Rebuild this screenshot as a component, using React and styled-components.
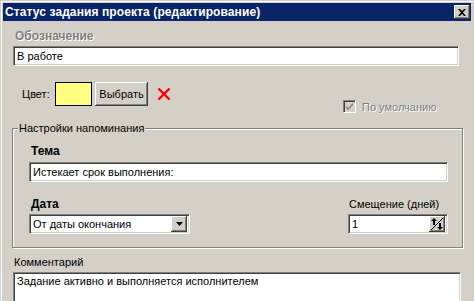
import styled, { createGlobalStyle } from "styled-components";

const GlobalStyle = createGlobalStyle`
  html, body {
    margin: 0;
    padding: 0;
    background: #d4d0c8;
  }
  body {
    font-family: "Liberation Sans", Arial, sans-serif;
    font-size: 11px;
    color: #000;
  }
`;

const sunken = `
  border: 1px solid;
  border-color: #808080 #ffffff #ffffff #808080;
  box-shadow: inset 1px 1px 0 #404040, inset -1px -1px 0 #d4d0c8;
`;

const raised = `
  box-shadow: inset -1px -1px 0 #404040, inset 1px 1px 0 #ffffff,
    inset -2px -2px 0 #808080, inset 2px 2px 0 #d4d0c8;
`;

const Window = styled.div`
  width: 474px;
  height: 301px;
  box-sizing: border-box;
  padding: 3px 3px 0 3px;
  background: #d4d0c8;
  overflow: hidden;
  box-shadow: inset 1px 1px 0 #d4d0c8, inset 2px 2px 0 #ffffff;
`;

const Caption = styled.div`
  height: 18px;
  background: #0a246a;
  display: flex;
  align-items: center;
  justify-content: space-between;
  padding: 0 1px 0 2px;
  color: #fff;
  font-weight: bold;
  font-size: 12px;
  letter-spacing: 0.1px;
`;

const CloseButton = styled.div`
  width: 16px;
  height: 14px;
  background: #d4d0c8;
  display: flex;
  align-items: center;
  justify-content: center;
  ${raised}
`;

const Body = styled.div`
  padding: 8px 0 0 10px;
`;

const BoldLabel = styled.div`
  font-size: 12px;
  font-weight: bold;
  line-height: 14px;
  height: 14px;
  margin-left: 2px;
  margin-bottom: ${(p) => p.$gap || 3}px;
  color: ${(p) => (p.$disabled ? "#808080" : "#000")};
  text-shadow: ${(p) => (p.$disabled ? "1px 1px 0 #ffffff" : "none")};
`;

const Label = styled.div`
  line-height: 14px;
  height: 14px;
  margin-left: 1px;
  margin-bottom: 3px;
`;

const Field = styled.input`
  display: block;
  width: ${(p) => p.$w}px;
  height: 20px;
  box-sizing: border-box;
  margin: 0;
  padding: 0 3px;
  background: #fff;
  font-family: inherit;
  font-size: 11px;
  color: #000;
  outline: none;
  ${sunken}
`;

const ColorRow = styled.div`
  display: flex;
  align-items: flex-start;
  margin-top: 16px;
  height: 31px;
`;

const ColorLabel = styled.div`
  width: 33px;
  margin-left: 9px;
  line-height: 24px;
`;

const Swatch = styled.div`
  width: 37px;
  height: 24px;
  box-sizing: border-box;
  border: 1px solid #000;
  background: #ffff80;
`;

const Button = styled.div`
  width: 53px;
  height: 24px;
  margin-left: 3px;
  background: #d4d0c8;
  display: flex;
  align-items: center;
  justify-content: center;
  ${raised}
`;

const ClearIcon = styled.svg`
  margin: 5px 0 0 9px;
  display: block;
`;

const DefaultCheck = styled.div`
  display: flex;
  align-items: center;
  margin: 18px 0 0 172px;
  color: #808080;
  text-shadow: 1px 1px 0 #ffffff;
`;

const CheckBox = styled.div`
  width: 13px;
  height: 13px;
  box-sizing: border-box;
  margin-right: 6px;
  background: #d4d0c8;
  display: flex;
  align-items: center;
  justify-content: center;
  ${sunken}
`;

const Group = styled.div`
  position: relative;
  margin: 15px 0 0 -1px;
  width: 451px;
  height: 120px;
  box-sizing: border-box;
  padding: 15px 14px 0 16px;
  border: 1px solid #808080;
  box-shadow: inset 1px 1px 0 #ffffff, 1px 1px 0 #ffffff;
`;

const Legend = styled.span`
  position: absolute;
  top: -7px;
  left: 5px;
  padding: 0 1px;
  line-height: 13px;
  background: #d4d0c8;
`;

const DateRow = styled.div`
  display: flex;
  justify-content: space-between;
  margin-top: 15px;
`;

const Column = styled.div`
  display: flex;
  flex-direction: column;
  width: ${(p) => p.$w}px;
`;

const Combo = styled.div`
  position: relative;
  width: ${(p) => p.$w}px;
  height: 20px;
  box-sizing: border-box;
  background: #fff;
  display: flex;
  align-items: center;
  padding: 0 2px 0 3px;
  ${sunken}
`;

const ComboText = styled.span`
  flex: 1;
`;

const SideButton = styled.div`
  width: 16px;
  height: 16px;
  background: #d4d0c8;
  display: flex;
  align-items: center;
  justify-content: center;
  ${raised}
`;

const Comment = styled.textarea`
  display: block;
  width: 448px;
  height: 40px;
  box-sizing: border-box;
  margin: 0;
  padding: 2px 3px;
  resize: none;
  background: #fff;
  font-family: inherit;
  font-size: 11px;
  color: #000;
  outline: none;
  overflow: hidden;
  ${sunken}
`;

const CommentLabel = styled(Label)`
  margin-top: 7px;
`;

export default function App() {
  return (
    <>
      <GlobalStyle />
      <Window>
        <Caption>
          <span>Статус задания проекта (редактирование)</span>
          <CloseButton>
            <svg width="8" height="7" viewBox="0 0 8 7">
              <path d="M0 0h2l2 2 2-2h2L5 3.5 8 7H6L4 5 2 7H0l3-3.5z" fill="#000" />
            </svg>
          </CloseButton>
        </Caption>
        <Body>
          <BoldLabel $disabled>Обозначение</BoldLabel>
          <Field $w={446} readOnly value="В работе" />

          <ColorRow>
            <ColorLabel>Цвет:</ColorLabel>
            <Swatch />
            <Button>Выбрать</Button>
            <ClearIcon width="14" height="14" viewBox="0 0 14 14">
              <path d="M1.5 1.5 L12.5 12.5 M12.5 1.5 L1.5 12.5" stroke="#ff0000" strokeWidth="2.4" />
            </ClearIcon>
            <DefaultCheck>
              <CheckBox>
                <svg width="7" height="7" viewBox="0 0 7 7">
                  <path d="M0 2l2 2 5-5v2l-5 5-2-2z" fill="#808080" transform="translate(0 1)" />
                </svg>
              </CheckBox>
              По умолчанию
            </DefaultCheck>
          </ColorRow>

          <Group>
            <Legend>Настройки напоминания</Legend>
            <BoldLabel $gap={4}>Тема</BoldLabel>
            <Field $w={419} readOnly value="Истекает срок выполнения:" />
            <DateRow>
              <Column $w={161}>
                <BoldLabel>Дата</BoldLabel>
                <Combo $w={161}>
                  <ComboText>От даты окончания</ComboText>
                  <SideButton>
                    <svg width="7" height="4" viewBox="0 0 7 4">
                      <path d="M0 0h7L3.5 4z" fill="#000" />
                    </svg>
                  </SideButton>
                </Combo>
              </Column>
              <Column $w={100}>
                <Label>Смещение (дней)</Label>
                <Combo $w={100}>
                  <ComboText>1</ComboText>
                  <SideButton>
                    <svg width="14" height="14" viewBox="0 0 14 14">
                      <path d="M1 13 L13 1" stroke="#000" strokeWidth="1" />
                      <path d="M4 1 L1 4 H3 V8 H5 V4 H7 Z" fill="#000" />
                      <path d="M10 13 L13 10 H11 V6 H9 V10 H7 Z" fill="#000" />
                    </svg>
                  </SideButton>
                </Combo>
              </Column>
            </DateRow>
          </Group>

          <CommentLabel>Комментарий</CommentLabel>
          <Comment readOnly value="Задание активно и выполняется исполнителем" />
        </Body>
      </Window>
    </>
  );
}
